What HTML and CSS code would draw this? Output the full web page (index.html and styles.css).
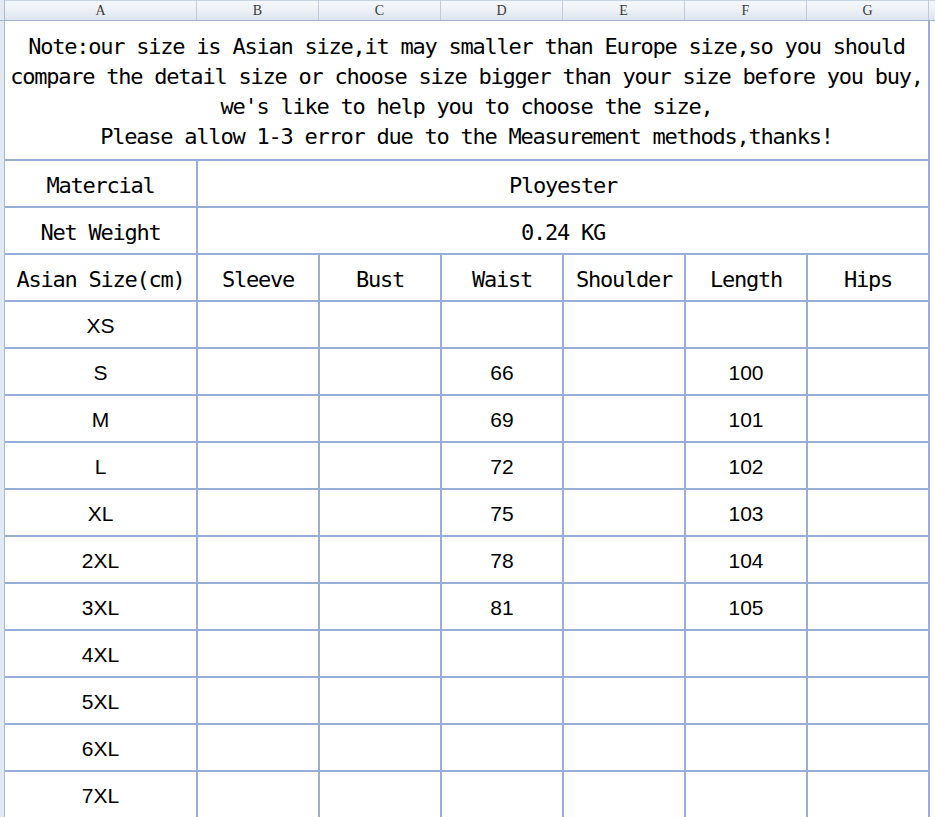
FILE: index.html
```html
<!DOCTYPE html>
<html>
<head>
<meta charset="utf-8">
<link rel="stylesheet" href="styles.css">
</head>
<body>
<div class="colhead">
  <div class="corner"></div>
  <div class="ch ch-a">A</div>
  <div class="ch">B</div>
  <div class="ch">C</div>
  <div class="ch">D</div>
  <div class="ch">E</div>
  <div class="ch">F</div>
  <div class="ch">G</div>
  <div class="ch-rest"></div>
</div>
<div class="sheet">
  <div class="rowhead"></div>
  <div class="grid">
    <div class="cell note span7">Note:our size is Asian size,it may smaller than Europe size,so you should<br>compare the detail size or choose size bigger than your size before you buy,<br>we's like to help you to choose the size,<br>Please allow 1-3 error due to the Measurement methods,thanks!</div>

    <div class="cell label">Matercial</div>
    <div class="cell label span6">Ployester</div>

    <div class="cell label">Net Weight</div>
    <div class="cell label span6">0.24 KG</div>

    <div class="cell label">Asian Size(cm)</div>
    <div class="cell label">Sleeve</div>
    <div class="cell label">Bust</div>
    <div class="cell label">Waist</div>
    <div class="cell label">Shoulder</div>
    <div class="cell label">Length</div>
    <div class="cell label">Hips</div>

    <div class="cell data">XS</div><div class="cell"></div><div class="cell"></div><div class="cell data"></div><div class="cell"></div><div class="cell data"></div><div class="cell"></div>
    <div class="cell data">S</div><div class="cell"></div><div class="cell"></div><div class="cell data">66</div><div class="cell"></div><div class="cell data">100</div><div class="cell"></div>
    <div class="cell data">M</div><div class="cell"></div><div class="cell"></div><div class="cell data">69</div><div class="cell"></div><div class="cell data">101</div><div class="cell"></div>
    <div class="cell data">L</div><div class="cell"></div><div class="cell"></div><div class="cell data">72</div><div class="cell"></div><div class="cell data">102</div><div class="cell"></div>
    <div class="cell data">XL</div><div class="cell"></div><div class="cell"></div><div class="cell data">75</div><div class="cell"></div><div class="cell data">103</div><div class="cell"></div>
    <div class="cell data">2XL</div><div class="cell"></div><div class="cell"></div><div class="cell data">78</div><div class="cell"></div><div class="cell data">104</div><div class="cell"></div>
    <div class="cell data">3XL</div><div class="cell"></div><div class="cell"></div><div class="cell data">81</div><div class="cell"></div><div class="cell data">105</div><div class="cell"></div>
    <div class="cell data">4XL</div><div class="cell"></div><div class="cell"></div><div class="cell"></div><div class="cell"></div><div class="cell"></div><div class="cell"></div>
    <div class="cell data">5XL</div><div class="cell"></div><div class="cell"></div><div class="cell"></div><div class="cell"></div><div class="cell"></div><div class="cell"></div>
    <div class="cell data">6XL</div><div class="cell"></div><div class="cell"></div><div class="cell"></div><div class="cell"></div><div class="cell"></div><div class="cell"></div>
    <div class="cell data">7XL</div><div class="cell"></div><div class="cell"></div><div class="cell"></div><div class="cell"></div><div class="cell"></div><div class="cell"></div>
  </div>
  <div class="rest"></div>
</div>
</body>
</html>
```
FILE: styles.css
```css
html, body {
  margin: 0;
  padding: 0;
  background: #ffffff;
}
body {
  width: 935px;
  height: 817px;
  overflow: hidden;
}
.colhead {
  display: flex;
  height: 20px;
  border-bottom: 1px solid #9eb3cd;
  background: linear-gradient(to bottom, #f5f7fb 0%, #eef2f7 45%, #dce4ef 100%);
  box-shadow: inset 0 1px 0 #c9d4e2;
}
.corner {
  width: 4px;
  flex: none;
  border-right: 1px solid #a9bbd2;
  background: #e2e9f3;
}
.ch {
  flex: none;
  width: 122px;
  border-right: 1px solid #bfcbdb;
  display: flex;
  align-items: center;
  justify-content: center;
  font-family: "Liberation Serif", serif;
  font-size: 14px;
  color: #3a3a3a;
  padding-top: 2px;
  box-sizing: border-box;
}
.ch-a {
  width: 192px;
}
.ch-rest {
  flex: 1;
}
.sheet {
  display: flex;
  height: 796px;
}
.rowhead {
  flex: none;
  width: 4px;
  border-right: 1px solid #a9bbd2;
  background: #e2e9f3;
}
.grid {
  flex: none;
  display: grid;
  grid-template-columns: 191px repeat(6, 120px);
  grid-template-rows: 138px repeat(14, 45px);
  gap: 2px;
  background: #98aed8;
  border-right: 2px solid #98aed8;
}
.rest {
  flex: 1;
  background: #ffffff;
}
.cell {
  background: #ffffff;
  display: flex;
  align-items: center;
  justify-content: center;
  color: #000000;
  white-space: nowrap;
  box-sizing: border-box;
}
.span7 {
  grid-column: span 7;
}
.span6 {
  grid-column: span 6;
}
.note,
.label {
  font-family: "DejaVu Sans Mono", monospace;
  font-size: 22px;
  letter-spacing: -1.24px;
}
.note {
  line-height: 30px;
  text-align: center;
  padding-top: 3px;
}
.label {
  padding-top: 4px;
}
.data {
  font-family: "Liberation Sans", Arial, sans-serif;
  font-size: 21px;
  padding-top: 3px;
}
```
